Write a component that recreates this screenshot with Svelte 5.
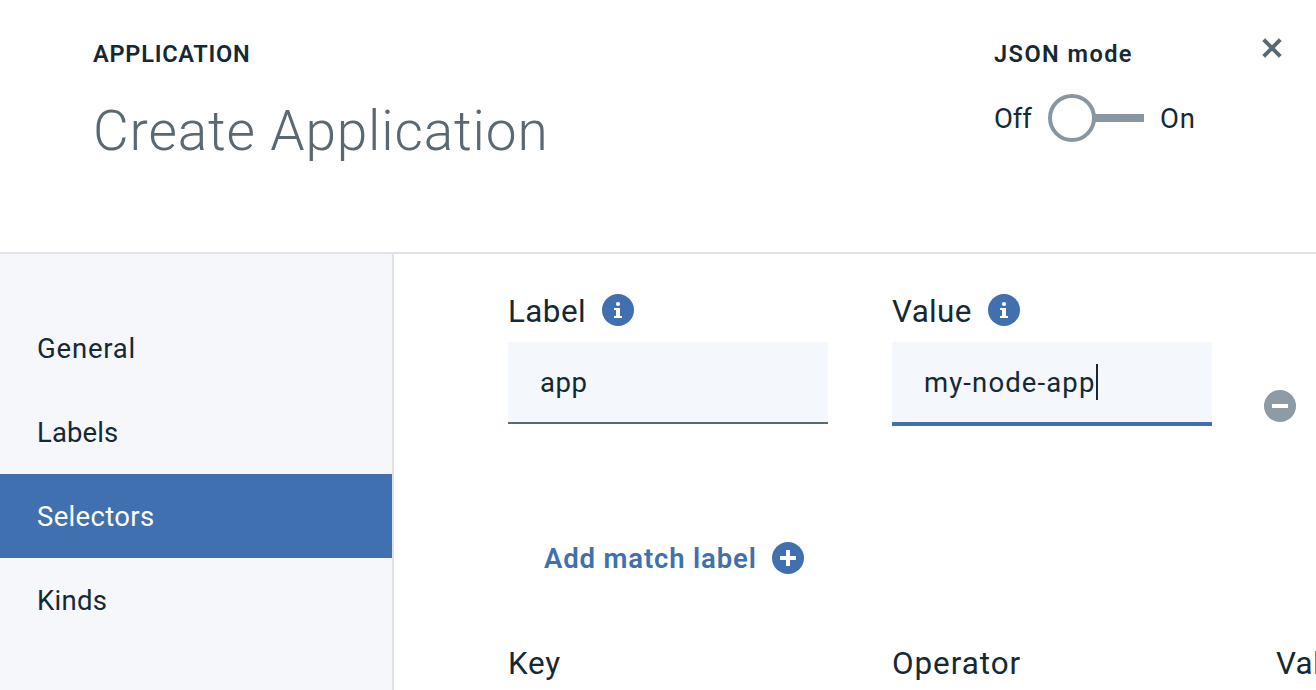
<script>
  let active = $state('Selectors');
  const sections = [
    { name: 'General', spacing: 0.8 },
    { name: 'Labels', spacing: 0.11 },
    { name: 'Selectors', spacing: 0.34 },
    { name: 'Kinds', spacing: 0.3 }
  ];
</script>

{#snippet info()}
  <svg class="icon" viewBox="0 0 32 32" width="32" height="32" aria-hidden="true">
    <circle cx="16" cy="16" r="16" fill="#4070b0" />
    <circle cx="16" cy="10" r="2.1" fill="#fff" />
    <path d="M12 14h6v8h2v2h-8v-2h2v-6h-2z" fill="#fff" />
  </svg>
{/snippet}

<div class="modal">
  <header>
    <div class="heading">
      <div class="eyebrow">APPLICATION</div>
      <h1>Create Application</h1>
    </div>
    <div class="mode">
      <div class="mode-title">JSON mode</div>
      <div class="toggle">
        <span class="off">Off</span>
        <span class="switch"><span class="knob"></span><span class="track"></span></span>
        <span class="on">On</span>
      </div>
    </div>
    <svg class="close" viewBox="0 0 20 20" width="20" height="20" aria-hidden="true">
      <path d="M1.7 1.7L18.3 18.3M18.3 1.7L1.7 18.3" stroke="#5a6872" stroke-width="4" />
    </svg>
  </header>

  <div class="body">
    <nav>
      {#each sections as s}
        <button class:active={active === s.name} style="letter-spacing: {s.spacing}px" onclick={() => (active = s.name)}>{s.name}</button>
      {/each}
    </nav>

    <main>
      <div class="row">
        <div class="field">
          <div class="caption"><span class="label-text">Label</span>{@render info()}</div>
          <div class="input"><span class="app">app</span></div>
        </div>
        <div class="field">
          <div class="caption"><span class="value-text">Value</span>{@render info()}</div>
          <div class="input focused"><span class="entry">my-node-app</span><span class="caret"></span></div>
        </div>
        <svg class="icon remove" viewBox="0 0 32 32" width="32" height="32" aria-hidden="true">
          <circle cx="16" cy="16" r="16" fill="#8c9ba5" />
          <path d="M8 14h16v4H8z" fill="#fff" />
        </svg>
      </div>

      <div class="add">
        <span>Add match label</span>
        <svg class="icon" viewBox="0 0 32 32" width="32" height="32" aria-hidden="true">
          <circle cx="16" cy="16" r="16" fill="#4070b0" />
          <path d="M14 8h4v6h6v4h-6v6h-4v-6H8v-4h6z" fill="#fff" />
        </svg>
      </div>

      <div class="columns">
        <span class="key">Key</span>
        <span class="operator">Operator</span>
        <span class="values">Values</span>
      </div>
    </main>
  </div>
</div>

<style>
  .modal {
    width: 1316px;
    height: 690px;
    overflow: hidden;
    display: flex;
    flex-direction: column;
    background: #fff;
    color: #152935;
    font-family: Roboto, "Liberation Sans", sans-serif;
    font-size: 27.5px;
    white-space: nowrap;
  }
  header {
    box-sizing: border-box;
    height: 254px;
    flex: none;
    display: flex;
    align-items: flex-start;
    border-bottom: 2px solid #dfe3e6;
    padding: 38px 34px 0 93px;
  }
  .heading { width: 901px; }
  .eyebrow, .mode-title {
    font-size: 23.57px;
    font-weight: 600;
    line-height: 32px;
    letter-spacing: 0.74px;
  }
  .mode-title { letter-spacing: 1.44px; }
  h1 {
    margin: 28px 0 0;
    font-size: 55px;
    font-weight: 300;
    line-height: 66px;
    letter-spacing: 0.85px;
    color: #5a6872;
  }
  .mode { width: 201px; }
  .toggle { display: flex; align-items: center; height: 48px; margin-top: 24px; }
  .off { flex: none; width: 54px; letter-spacing: -0.1px; padding-top: 1px; }
  .on { flex: none; letter-spacing: 0.8px; padding: 1px 0 0 16px; }
  .switch { flex: none; display: flex; align-items: center; width: 96px; }
  .knob { box-sizing: border-box; width: 48px; height: 48px; border: 4px solid #8897a2; border-radius: 50%; flex: none; }
  .track { flex: 1; height: 8px; background: #8897a2; margin-left: -1px; }
  .close { display: block; margin-left: 67px; }

  .body { flex: 1; display: flex; min-height: 0; }
  nav {
    width: 392px;
    flex: none;
    display: flex;
    flex-direction: column;
    padding-top: 52px;
    background: #f5f7fb;
    border-right: 2px solid #dfe3e6;
  }
  button {
    height: 84px;
    border: 0;
    background: none;
    padding: 1px 0 0 37px;
    text-align: left;
    font: inherit;
    color: inherit;
  }
  button.active { background: #4070b0; color: #fff; }

  main { flex: 1; min-width: 0; overflow: hidden; padding: 40px 0 0 114px; }
  .row { display: flex; align-items: flex-start; height: 132px; }
  .field { box-sizing: border-box; width: 320px; margin-right: 64px; flex: none; }
  .field + .field { margin-right: 52px; }
  .caption { display: flex; align-items: center; gap: 16px; height: 32px; font-size: 31.4px; line-height: 32px; }
  .caption span { padding-top: 3px; }
  .label-text { width: 78px; letter-spacing: 0.43px; }
  .value-text { width: 80px; letter-spacing: 0.35px; }
  .icon { display: block; flex: none; }
  .input {
    display: flex;
    align-items: center;
    height: 80px;
    margin-top: 16px;
    padding-left: 32px;
    background: #f4f7fb;
    border-bottom: 2px solid #5a6872;
  }
  .input.focused { border-bottom: 4px solid #4070b0; }
  .app { letter-spacing: 0.56px; }
  .entry { width: 172px; letter-spacing: 1.12px; }
  .caret { width: 2px; height: 36px; background: #152935; }
  .remove { margin-top: 96px; }

  .add {
    display: flex;
    align-items: center;
    height: 32px;
    margin: 116px 0 0 36px;
    color: #4070b0;
    font-weight: 600;
    letter-spacing: 0.85px;
  }
  .add span { width: 228px; padding-top: 1px; }
  .columns {
    display: grid;
    grid-template-columns: 320px 320px 320px;
    gap: 64px;
    margin-top: 74px;
    font-size: 31.4px;
    line-height: 32px;
  }
  .key { letter-spacing: 0.8px; }
  .operator { letter-spacing: 0.95px; }
  .values { letter-spacing: 0.3px; }
</style>
